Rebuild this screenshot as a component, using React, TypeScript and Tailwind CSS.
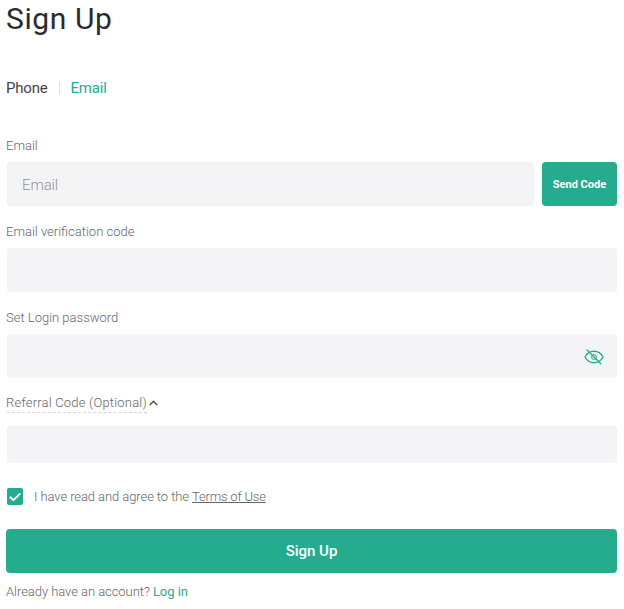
import type { ReactNode } from "react";

function Label({ children }: { children: ReactNode }) {
  return (
    <label className="-ml-px block h-5 text-[13px] leading-5 font-light text-[#66666b]">
      {children}
    </label>
  );
}

function EyeOffIcon() {
  return (
    <svg
      className="mt-px"
      width="20"
      height="16"
      viewBox="0 0 20 16"
      fill="none"
      stroke="#25ac8e"
      strokeWidth="1.4"
      strokeLinecap="round"
    >
      <path d="M1 8C3 4.2 6.2 2.3 10 2.3S17 4.2 19 8c-2 3.8-5.2 5.7-9 5.7S3 11.8 1 8Z" />
      <circle cx="10" cy="8" r="2.4" strokeWidth="1.1" strokeOpacity="0.8" />
      <path d="M3 1 16.8 14.8" />
    </svg>
  );
}

export default function App() {
  return (
    <div className="h-[609px] w-[624px] overflow-hidden bg-white pr-[7px] pl-1.5 font-['Roboto',sans-serif]">
      <h1 className="h-[38px] text-[30px] leading-[38px] tracking-[0.6px] text-[#2b2b2d]">
        Sign Up
      </h1>

      <div className="mt-10 flex h-5 items-center text-[15px] tracking-[-0.2px]">
        <span className="text-[#444447]">Phone</span>
        <span className="mr-[11px] ml-[11px] h-3 w-px bg-[#dddde0]" />
        <span className="text-[#25ac8e]">Email</span>
      </div>

      <div className="mt-[38px] pl-px">
        <Label>Email</Label>
        <div className="mt-1.5 flex h-11 gap-2">
          <div className="flex flex-1 items-center rounded-[3px] bg-[#f4f4f7] pt-0.5 pl-[15px] text-[15px] font-light tracking-[-0.1px] text-[#929297]">
            Email
          </div>
          <button className="w-[75px] rounded bg-[#25ac8e] pt-0.5 text-[11px] font-bold text-white">
            Send Code
          </button>
        </div>
      </div>

      <div className="mt-4 pl-px">
        <Label>Email verification code</Label>
        <div className="mt-1.5 h-11 rounded-[3px] bg-[#f4f4f7]" />
      </div>

      <div className="mt-4 pl-px">
        <Label>Set Login password</Label>
        <div className="mt-1.5 flex h-11 items-center justify-end rounded-[3px] bg-[#f4f4f7] pr-[13px]">
          <EyeOffIcon />
        </div>
      </div>

      <div className="mt-[15px] pl-px">
        <div className="flex h-5 items-center">
          <span className="h-5 border-b border-dashed border-[#d5d5d8] tracking-[0.2px]">
            <Label>Referral Code (Optional)</Label>
          </span>
          <svg className="ml-0.5" width="9" height="6" viewBox="0 0 9 6" fill="none" stroke="#555558" strokeWidth="1.6">
            <path d="m.8 5 3.7-3.7L8.2 5" />
          </svg>
        </div>
        <div className="mt-[13px] h-[37px] rounded-[3px] bg-[#f4f4f7]" />
      </div>

      <div className="mt-6 flex h-5 items-center text-[13px] font-light tracking-[-0.08px] text-[#66666b]">
        <span className="mr-[11px] mb-px ml-px flex h-[17px] w-4 items-center justify-center rounded-xs bg-[#25ac8e]">
          <svg width="12" height="10" viewBox="0 0 12 10" fill="none" stroke="white" strokeWidth="2">
            <path d="M.8 4.8 4.4 8.2 11.3 1.4" />
          </svg>
        </span>
        <span>
          I have read and agree to the{" "}
          <a className="tracking-[-0.2px] underline">Terms of Use</a>
        </span>
      </div>

      <button className="mt-[22px] block h-11 w-full rounded bg-[#25ac8e] pt-px text-[15px] font-medium text-white">
        Sign Up
      </button>

      <p className="mt-[9px] h-5 text-[13px] leading-5 font-light tracking-[-0.05px] text-[#66666b]">
        Already have an account? <a className="font-normal text-[#25ac8e]">Log in</a>
      </p>
    </div>
  );
}
